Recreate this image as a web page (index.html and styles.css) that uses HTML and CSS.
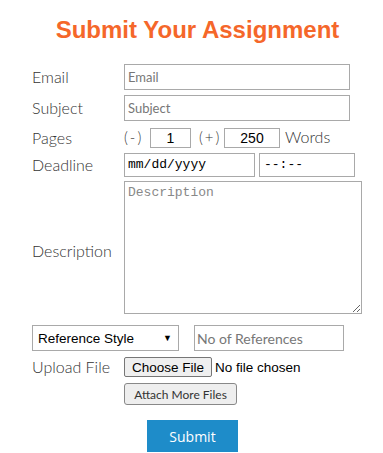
FILE: index.html
```html
<!DOCTYPE html>
<html lang="en">
<head>
    <meta charset="UTF-8">
    <meta name="viewport" content="width=device-width, initial-scale=1.0">
    <title>Submit Your Assignment</title>
    <link rel="stylesheet" href="styles.css">
</head>
<body>
    <div class="container">
        <h1>Submit Your Assignment</h1>

        <form class="order-form">
            <div class="row row-email">
                <label for="email">Email</label>
                <input type="text" id="email" class="text-input" placeholder="Email">
            </div>

            <div class="row row-subject">
                <label for="subject">Subject</label>
                <input type="text" id="subject" class="text-input" placeholder="Subject">
            </div>

            <div class="row row-pages">
                <label>Pages</label>
                <span class="step">(-)</span>
                <input type="text" class="num-input pages" value="1">
                <span class="step">(+)</span>
                <input type="text" class="num-input words" value="250">
                <span class="words-label">Words</span>
            </div>

            <div class="row row-deadline">
                <label>Deadline</label>
                <span class="fake-input date">mm/dd/yyyy</span>
                <span class="fake-input time">--:--</span>
            </div>

            <div class="row row-description">
                <label for="description">Description</label>
                <textarea id="description" placeholder="Description"></textarea>
            </div>

            <div class="row row-refs">
                <div class="select-box">
                    <span>Reference Style</span>
                    <span class="arrow">&#9660;</span>
                </div>
                <input type="text" class="refs-input" placeholder="No of References">
            </div>

            <div class="row row-upload">
                <label>Upload File</label>
                <button type="button" class="file-btn">Choose File</button>
                <span class="no-file">No file chosen</span>
            </div>

            <div class="row row-attach">
                <button type="button" class="attach-btn">Attach More Files</button>
            </div>

            <div class="submit-row">
                <button type="button" class="submit-btn">Submit</button>
            </div>
        </form>
    </div>
</body>
</html>
```

FILE: styles.css
```css
body {
    margin: 0;
    padding: 0;
    background: #fff;
    font-family: 'Lato', sans-serif;
    color: #555;
}

.container {
    width: 383px;
}

h1 {
    margin: 0;
    padding-top: 16px;
    height: 48px;
    box-sizing: border-box;
    text-align: center;
    font-family: 'Liberation Sans', Arial, sans-serif;
    font-weight: bold;
    font-size: 24px;
    line-height: 28px;
    color: #f5672a;
    padding-left: 12px;
}

.order-form {
    padding-left: 32px;
}

.row {
    display: flex;
    align-items: center;
}

.row label {
    width: 92px;
    flex-shrink: 0;
    font-size: 16px;
    font-weight: 300;
    color: #333;
    margin-top: -2px;
}

.text-input {
    width: 226px;
    height: 26px;
    box-sizing: border-box;
    border: 1px solid #a9a9a9;
    padding: 0 3px;
    font-family: 'Lato', sans-serif;
    font-size: 13px;
    color: #333;
}

.text-input::placeholder,
.refs-input::placeholder {
    color: #777;
}

.row-email {
    margin-top: 16px;
}

.row-subject {
    margin-top: 5px;
}

.row-pages {
    margin-top: 7px;
    height: 20px;
}

.step {
    font-size: 15px;
    font-weight: 300;
    letter-spacing: 2px;
    color: #333;
    width: 26px;
    margin-top: -3px;
}

.num-input {
    height: 20px;
    box-sizing: border-box;
    border: 1px solid #a9a9a9;
    text-align: center;
    font-family: 'Liberation Sans', Arial, sans-serif;
    font-size: 14px;
    color: #000;
    padding: 0;
}

.num-input.pages {
    width: 41px;
    margin-right: 8px;
}

.num-input.words {
    width: 56px;
    margin-left: 0;
}

.step + .num-input.words {
    margin-left: -1px;
}

.words-label {
    margin-left: 5px;
    margin-top: -3px;
    font-size: 16px;
    font-weight: 300;
    color: #333;
}

.row-deadline {
    margin-top: 5px;
}

.fake-input {
    height: 24px;
    box-sizing: border-box;
    border: 1px solid #a9a9a9;
    font-family: 'Liberation Mono', monospace;
    font-size: 13px;
    line-height: 22px;
    color: #000;
    padding-left: 3px;
}

.fake-input.date {
    width: 131px;
}

.fake-input.time {
    width: 96px;
    margin-left: 4px;
    padding-left: 4px;
}

.row-description {
    margin-top: 4px;
}

.row-description label {
    margin-top: 6px;
}

textarea {
    width: 238px;
    height: 133px;
    box-sizing: border-box;
    border: 1px solid #a9a9a9;
    padding: 3px;
    font-family: 'Liberation Mono', monospace;
    font-size: 13px;
    resize: both;
    margin: 0;
}

textarea::placeholder {
    color: #888;
}

.row-refs {
    margin-top: 11px;
}

.select-box {
    width: 147px;
    height: 26px;
    box-sizing: border-box;
    border: 1px solid #a9a9a9;
    display: flex;
    align-items: center;
    justify-content: space-between;
    padding: 0 6px 0 5px;
    font-family: 'Liberation Sans', Arial, sans-serif;
    font-size: 13.5px;
    color: #000;
}

.select-box .arrow {
    font-size: 9px;
}

.refs-input {
    width: 150px;
    height: 26px;
    box-sizing: border-box;
    margin-left: 15px;
    border: 1px solid #a9a9a9;
    padding: 0 2px;
    font-family: 'Lato', sans-serif;
    font-size: 14px;
}

.row-upload {
    margin-top: 6px;
}

.file-btn {
    width: 88px;
    height: 20px;
    box-sizing: border-box;
    border: 1px solid #767676;
    border-radius: 2px;
    background: #efefef;
    font-family: 'Liberation Sans', Arial, sans-serif;
    font-size: 13.5px;
    color: #000;
    padding: 0;
}

.no-file {
    margin-left: 3px;
    font-family: 'Liberation Sans', Arial, sans-serif;
    font-size: 13.5px;
    color: #000;
}

.row-attach {
    margin-top: 6px;
    padding-left: 92px;
}

.attach-btn {
    width: 113px;
    height: 22px;
    box-sizing: border-box;
    border: 1px solid #888;
    border-radius: 3px;
    background: #eee;
    font-family: 'Lato', sans-serif;
    font-size: 12px;
    color: #333;
    padding: 0;
}

.submit-row {
    margin-top: 15px;
    padding-left: 115px;
}

.submit-btn {
    width: 91px;
    height: 32px;
    border: none;
    background: #1e8cc9;
    color: #fff;
    font-family: 'Open Sans', sans-serif;
    font-size: 14px;
    padding: 0;
}
```
